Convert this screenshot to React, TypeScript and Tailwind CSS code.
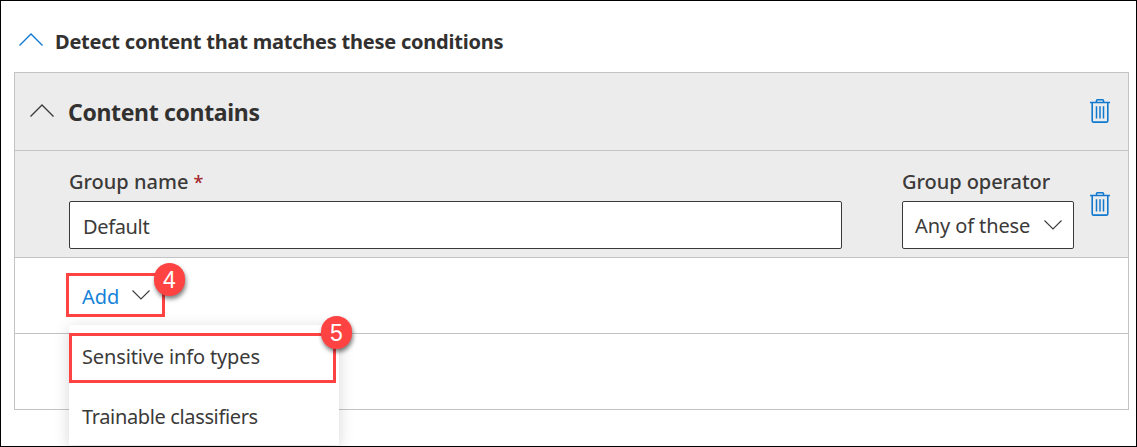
import type { ReactNode } from "react";

function Chevron({ up = false, className = "" }: { up?: boolean; className?: string }) {
  return up ? (
    <svg width="24" height="13" viewBox="0 0 24 13" fill="none" stroke="currentColor" className={`shrink-0 ${className}`}>
      <path d="M.5 12.5 12 1l11.5 11.5" strokeWidth="1.4" />
    </svg>
  ) : (
    <svg width="18" height="10" viewBox="0 0 18 10" fill="none" stroke="currentColor" className={`shrink-0 ${className}`}>
      <path d="M.5.5 9 9 17.5.5" strokeWidth="1.1" />
    </svg>
  );
}

function TrashButton() {
  return (
    <button type="button" aria-label="Delete" className="block h-6 w-5 shrink-0 text-[#0f78d0]">
      <svg width="20" height="24" viewBox="0 0 20 24" fill="none" stroke="currentColor" strokeWidth="1.6">
        <path d="M0 3.5h20M6.5 3.5V1.7Q6.5.8 7.4.8h5.2q.9 0 .9.9v1.8M2.2 3.5v18.2q0 1.4 1.4 1.4h12.8q1.4 0 1.4-1.4V3.5" />
        <path d="M6.5 7.2v12.3M10 7.2v12.3M13.5 7.2v12.3" strokeWidth="1.5" />
      </svg>
    </button>
  );
}

function Badge({ children, className }: { children: ReactNode; className: string }) {
  return (
    <span
      className={`absolute flex h-[33px] w-[31px] items-center justify-center rounded-full bg-[#ff4343] pt-px font-['Liberation_Sans',sans-serif] text-[23px] leading-none tracking-normal text-white shadow-[1px_3px_4px_rgba(0,0,0,0.5)] ${className}`}
    >
      {children}
    </span>
  );
}

export default function App() {
  return (
    <div className="relative h-[447px] w-[1137px] overflow-hidden border border-black bg-white font-['Noto_Sans',sans-serif] text-[20px] leading-7 whitespace-nowrap text-[#3b3a39]">
      <header className="flex h-[71px] items-start pt-[27px] pl-[18px]">
        <Chevron up className="mt-[5px] mr-[12px] text-[#0f78d0]" />
        <h2 className="font-bold tracking-[-0.23px] text-[#323130]">Detect content that matches these conditions</h2>
      </header>

      <section className="ml-[13px] w-[1115px] border border-[#c3c3c3]">
        <div className="flex h-[78px] items-center border-b border-[#c3c3c3] bg-[#ececec] pr-[18px] pl-[15px]">
          <Chevron up className="mr-[14px] -mt-[2px]" />
          <h3 className="flex-1 text-[23px] font-bold tracking-[-0.34px] text-[#323130]">Content contains</h3>
          <div className="-mt-[2px]">
            <TrashButton />
          </div>
        </div>

        <div className="flex h-[107px] items-start border-b border-[#c3c3c3] bg-[#ececec] pt-[17px] pr-[18px] pl-[54px]">
          <div className="w-[773px]">
            <label className="block h-[33px] font-medium">
              <span>Group name</span>{" "}
              <span className="text-[18px] text-[#a4262c]">*</span>
            </label>
            <div className="flex h-12 items-center rounded-[2px] border border-[#3b3a39] bg-white pt-[4px] pl-[13px]">
              <span className="tracking-[-0.35px]">Default</span>
            </div>
          </div>
          <div className="ml-[60px] w-[172px]">
            <label className="block h-[33px] font-medium">
              <span className="tracking-[-0.05px]">Group operator</span>
            </label>
            <div className="flex h-12 items-center justify-between rounded-[2px] border border-[#3b3a39] bg-white pr-[11px] pl-[12px]">
              <span className="pt-[2px] tracking-[-0.1px]">Any of these</span>
              <Chevron />
            </div>
          </div>
          <div className="mt-[24px] ml-auto">
            <TrashButton />
          </div>
        </div>

        <div className="flex h-[76px] items-start border-b border-[#c3c3c3] pt-[15px] pl-[51px]">
          <div className="relative">
            <button type="button" className="flex h-11 w-[99px] items-center justify-between border-3 border-[#ff4343] pr-[12px] pl-[13px]">
              <span className="pt-[3px] text-[#1583d8]">Add</span>
              <Chevron />
            </button>
            <Badge className="-top-[10px] left-[88px]">4</Badge>
            <div className="absolute top-[52px] left-[3px] z-10 h-[120px] w-[270px] rounded-[2px] bg-white shadow-[0_3px_16px_rgba(0,0,0,0.16)]">
              <div className="mt-[8px] flex h-[50px] w-[267px] items-center border-3 border-[#ff4343] pb-[3px] pl-[10px]">
                <span className="tracking-[-0.14px]">Sensitive info types</span>
              </div>
              <div className="mt-[20px] pl-[13px]">
                <span className="tracking-[-0.36px]">Trainable classifiers</span>
              </div>
              <Badge className="-top-[9px] left-[252px]">5</Badge>
            </div>
          </div>
        </div>

        <div className="h-[75px]" />
      </section>
    </div>
  );
}
